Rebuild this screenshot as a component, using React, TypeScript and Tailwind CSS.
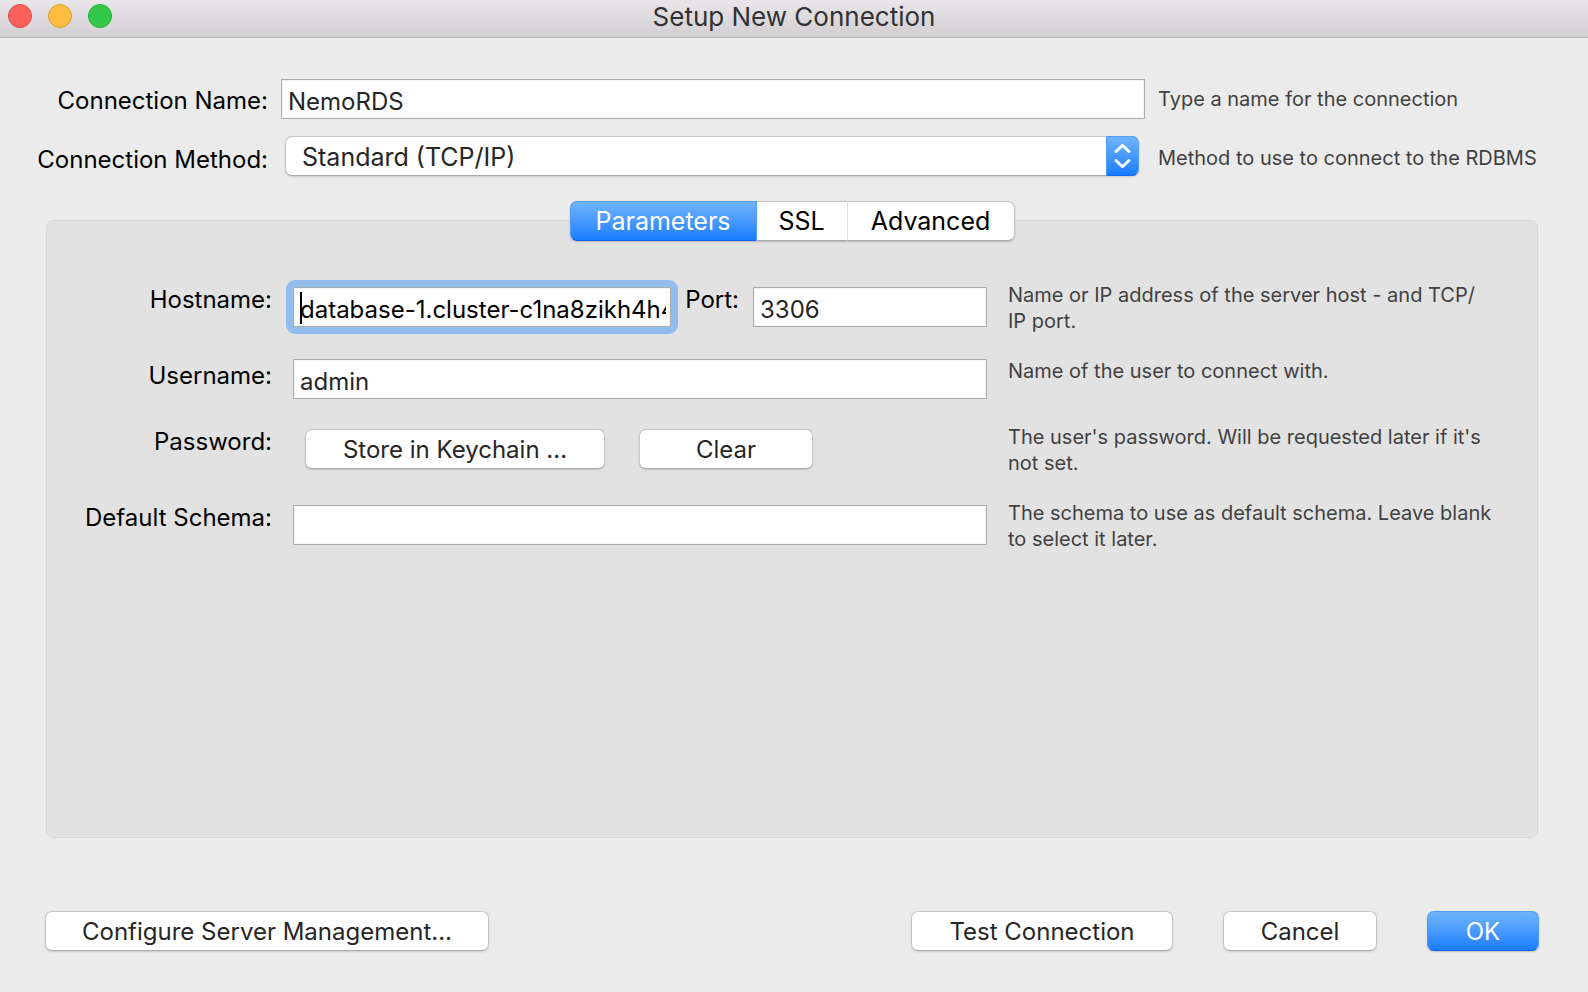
import { useState } from "react";
import type { ReactNode } from "react";

const TABS = ["Parameters", "SSL", "Advanced"];

const fieldClass =
  "block h-10 w-full min-w-0 border border-[#acacac] bg-white pt-1 pr-1 pl-1.5 text-[24px] leading-8 text-[#262626] shadow-[inset_0_0_0_1px_#f3f3f3] outline-none";

const plainButton =
  "h-10 rounded-[7px] border border-[#c6c6c6] border-b-[#aaaaaa] bg-white pt-0.5 text-[24px] leading-8 text-[#262626] shadow-[0_1px_2px_rgba(0,0,0,0.14)]";

const blueFill =
  "border border-[#4f9df5] border-b-[#0f63f5] bg-linear-to-b from-[#6fb4fa] to-[#167dfd] text-white";

const labelClass = "text-right text-[24px] leading-8 whitespace-nowrap text-black";

function Hint({ children }: { children: ReactNode }) {
  return <p className="text-[20px] leading-[26px] whitespace-pre-line text-[#414141]">{children}</p>;
}

function ConnectionRow({
  label,
  htmlFor,
  hint,
  children,
}: {
  label: string;
  htmlFor: string;
  hint: string;
  children: ReactNode;
}) {
  return (
    <div className="grid grid-cols-[232px_minmax(0,1fr)_430px] items-center gap-x-[13px]">
      <label htmlFor={htmlFor} className={`${labelClass} pt-1`}>
        {label}
      </label>
      {children}
      <Hint>{hint}</Hint>
    </div>
  );
}

function ParameterRow({ label, hint, children }: { label: ReactNode; hint: string; children: ReactNode }) {
  return (
    <div className="grid min-h-[42px] grid-cols-[202px_minmax(0,1fr)_488px] items-start gap-x-[21px]">
      {label}
      {children}
      <Hint>{hint}</Hint>
    </div>
  );
}

function TitleBar() {
  return (
    <header className="grid h-[38px] grid-cols-[1fr_auto_1fr] items-start border-b border-[#b1afb1] bg-linear-to-b from-[#e8e6e9] to-[#d1cfd2] px-2">
      <div className="flex gap-4 pt-1">
        <button aria-label="Close" className="size-6 rounded-full border border-[#e2463f] bg-[#fc605b]" />
        <button aria-label="Minimize" className="size-6 rounded-full border border-[#dfa033] bg-[#fdbd41]" />
        <button aria-label="Zoom" className="size-6 rounded-full border border-[#26ab35] bg-[#34c84a]" />
      </div>
      <h1 className="text-[26px] leading-[34px] text-[#333133]">Setup New Connection</h1>
    </header>
  );
}

export default function App() {
  const [tab, setTab] = useState("Parameters");
  const [name, setName] = useState("NemoRDS");
  const [host, setHost] = useState("database-1.cluster-c1na8zikh4h4");
  const [port, setPort] = useState("3306");
  const [user, setUser] = useState("admin");
  const [schema, setSchema] = useState("");

  return (
    <div className="flex min-h-screen flex-col bg-[#ebebeb] font-['Inter','Liberation_Sans',sans-serif]">
      <TitleBar />
      <main className="flex flex-1 flex-col py-[41px] pr-[50px] pl-[46px]">
        <div className="-mr-[50px] -ml-[10px] flex flex-col gap-[17px]">
          <ConnectionRow label="Connection Name:" htmlFor="name" hint="Type a name for the connection">
            <input id="name" className={fieldClass} value={name} onChange={(e) => setName(e.target.value)} />
          </ConnectionRow>
          <ConnectionRow label="Connection Method:" htmlFor="method" hint="Method to use to connect to the RDBMS">
            <div className="relative mr-1.5 mb-1 ml-1">
              <select
                id="method"
                className="block h-10 w-full appearance-none rounded-[7px] border border-[#c6c6c6] border-b-[#aaaaaa] bg-white pt-0.5 pr-10 pl-4 text-[25px] leading-8 text-[#262626] shadow-[0_1px_2px_rgba(0,0,0,0.14)] outline-none"
              >
                <option>Standard (TCP/IP)</option>
              </select>
              <span
                className={`pointer-events-none absolute inset-y-0 right-0 flex w-[33px] items-center justify-center rounded-r-[7px] ${blueFill}`}
              >
                <svg
                  viewBox="0 0 17 26"
                  className="h-[26px] w-[17px]"
                  fill="none"
                  stroke="currentColor"
                  strokeWidth="2.8"
                  strokeLinecap="round"
                  strokeLinejoin="round"
                >
                  <path d="M2 8.6 8.5 2.2 15 8.6M2 17.4l6.5 6.4L15 17.4" />
                </svg>
              </span>
            </div>
          </ConnectionRow>
        </div>

        <div
          role="tablist"
          className="relative z-10 mt-[21px] -mb-[21px] flex self-center rounded-[7px] shadow-[0_1px_2px_rgba(0,0,0,0.2)]"
        >
          {TABS.map((item) => (
            <button
              key={item}
              role="tab"
              aria-selected={item === tab}
              onClick={() => setTab(item)}
              className={`h-10 text-[25px] leading-8 first:w-[187px] first:rounded-l-[7px] last:w-[167px] last:rounded-r-[7px] nth-2:w-[91px] ${
                item === tab
                  ? blueFill
                  : "border border-l-0 border-[#c6c6c6] border-b-[#aaaaaa] bg-white text-black nth-2:border-r-[#dedede]"
              }`}
            >
              {item}
            </button>
          ))}
        </div>

        <section className="flex flex-1 flex-col rounded-[7px] border border-[#d8d8d8] bg-[#e2e2e2] pt-[61px] pr-[41px] pl-[23px]">
          <div className="flex flex-col gap-6">
            <ParameterRow
              label={
                <label htmlFor="host" className={`${labelClass} pt-0.5`}>
                  Hostname:
                </label>
              }
              hint={"Name or IP address of the server host - and TCP/\nIP port."}
            >
              <div className="flex items-start">
                <div className="relative mt-[5px] flex-1 rounded-xs outline-[7px] outline-[#92bdee]">
                  <input
                    id="host"
                    className={`${fieldClass} text-black`}
                    value={host}
                    onChange={(e) => setHost(e.target.value)}
                  />
                  <span className="pointer-events-none absolute top-[5px] left-[7px] h-8 w-0.5 bg-black" />
                </div>
                <label htmlFor="port" className={`${labelClass} px-3.5 pt-0.5`}>
                  Port:
                </label>
                <div className="mt-[5px] w-[234px]">
                  <input id="port" className={fieldClass} value={port} onChange={(e) => setPort(e.target.value)} />
                </div>
              </div>
            </ParameterRow>
            <ParameterRow
              label={
                <label htmlFor="user" className={`${labelClass} pt-0.5`}>
                  Username:
                </label>
              }
              hint="Name of the user to connect with."
            >
              <div className="mt-px">
                <input id="user" className={fieldClass} value={user} onChange={(e) => setUser(e.target.value)} />
              </div>
            </ParameterRow>
            <ParameterRow
              label={
                <span id="password-label" className={`${labelClass} pt-0.5`}>
                  Password:
                </span>
              }
              hint="The user's password. Will be requested later if it's not set."
            >
              <div role="group" aria-labelledby="password-label" className="mt-[5px] flex gap-[34px] pl-3">
                <button className={`${plainButton} w-[300px]`}>Store in Keychain ...</button>
                <button className={`${plainButton} w-[174px]`}>Clear</button>
              </div>
            </ParameterRow>
            <ParameterRow
              label={
                <label htmlFor="schema" className={`${labelClass} pt-0.5`}>
                  Default Schema:
                </label>
              }
              hint="The schema to use as default schema. Leave blank to select it later."
            >
              <div className="mt-[5px]">
                <input id="schema" className={fieldClass} value={schema} onChange={(e) => setSchema(e.target.value)} />
              </div>
            </ParameterRow>
          </div>
        </section>

        <footer className="-mx-px mt-[73px] flex">
          <button className={`${plainButton} w-[444px]`}>Configure Server Management...</button>
          <div className="ml-auto flex gap-[50px]">
            <button className={`${plainButton} w-[262px]`}>Test Connection</button>
            <button className={`${plainButton} w-[154px]`}>Cancel</button>
            <button
              className={`h-10 w-28 rounded-[7px] pt-0.5 text-[24px] leading-8 shadow-[0_1px_2px_rgba(0,0,0,0.2)] ${blueFill}`}
            >
              OK
            </button>
          </div>
        </footer>
      </main>
    </div>
  );
}
